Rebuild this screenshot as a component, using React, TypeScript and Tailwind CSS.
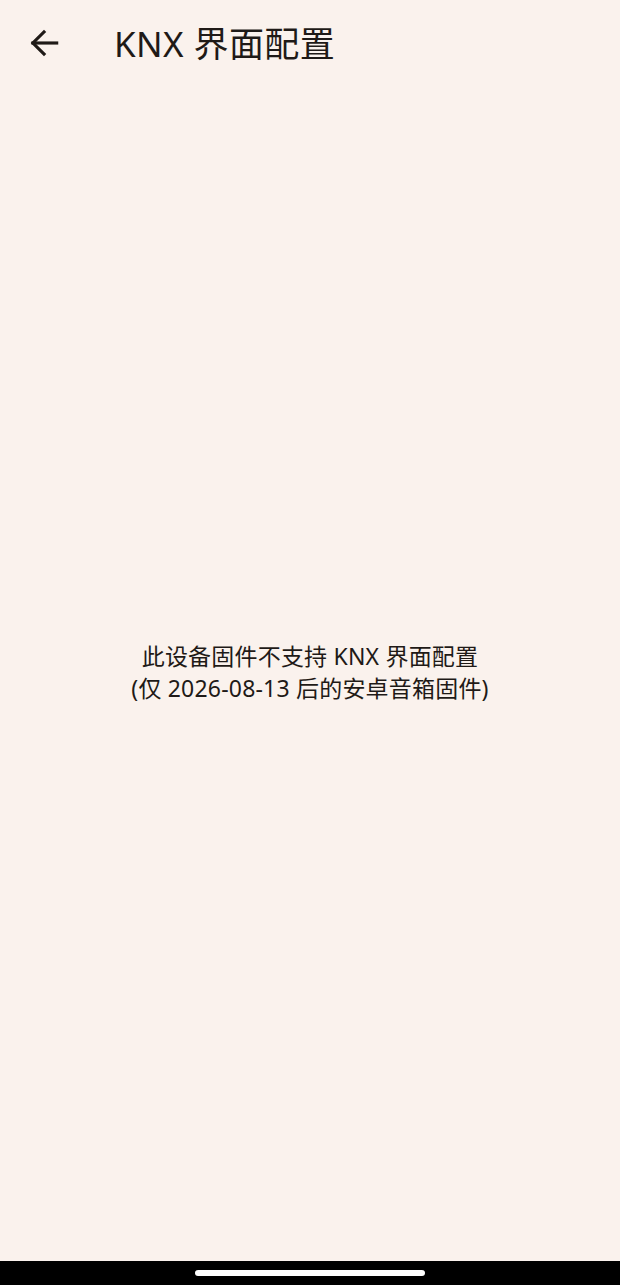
import React from "react";

function BackArrow() {
  return (
    <svg
      width="38"
      height="38"
      viewBox="0 0 24 24"
      fill="none"
      stroke="#1f1a17"
      strokeWidth="2"
      strokeLinecap="square"
    >
      <path d="M20 12H5" />
      <path d="M12 5l-7 7 7 7" />
    </svg>
  );
}

export default function App() {
  return (
    <div
      className="flex h-[1285px] w-full flex-col bg-[#faf2ed] text-[#1f1a17]"
      style={{ fontFamily: '"Noto Sans", "Noto Sans CJK SC", sans-serif' }}
    >
      {/* Top app bar */}
      <header className="flex h-[86px] items-center">
        <button type="button" className="ml-[25px] flex h-[38px] w-[38px] items-center justify-center">
          <BackArrow />
        </button>
        <h1 className="ml-[51px] text-[35px] leading-none font-normal tracking-[0.4px]">KNX 界面配置</h1>
      </header>

      {/* Body */}
      <main className="flex flex-1 items-center justify-center pb-[4px]">
        <p className="text-center text-[23px] leading-[32px] tracking-[0.2px]">
          此设备固件不支持 KNX 界面配置
          <br />
          (仅 2026-08-13 后的安卓音箱固件)
        </p>
      </main>

      {/* Gesture nav bar */}
      <div className="flex h-[24px] items-center justify-center bg-black">
        <div className="h-[6px] w-[230px] rounded-full bg-white" />
      </div>
    </div>
  );
}
